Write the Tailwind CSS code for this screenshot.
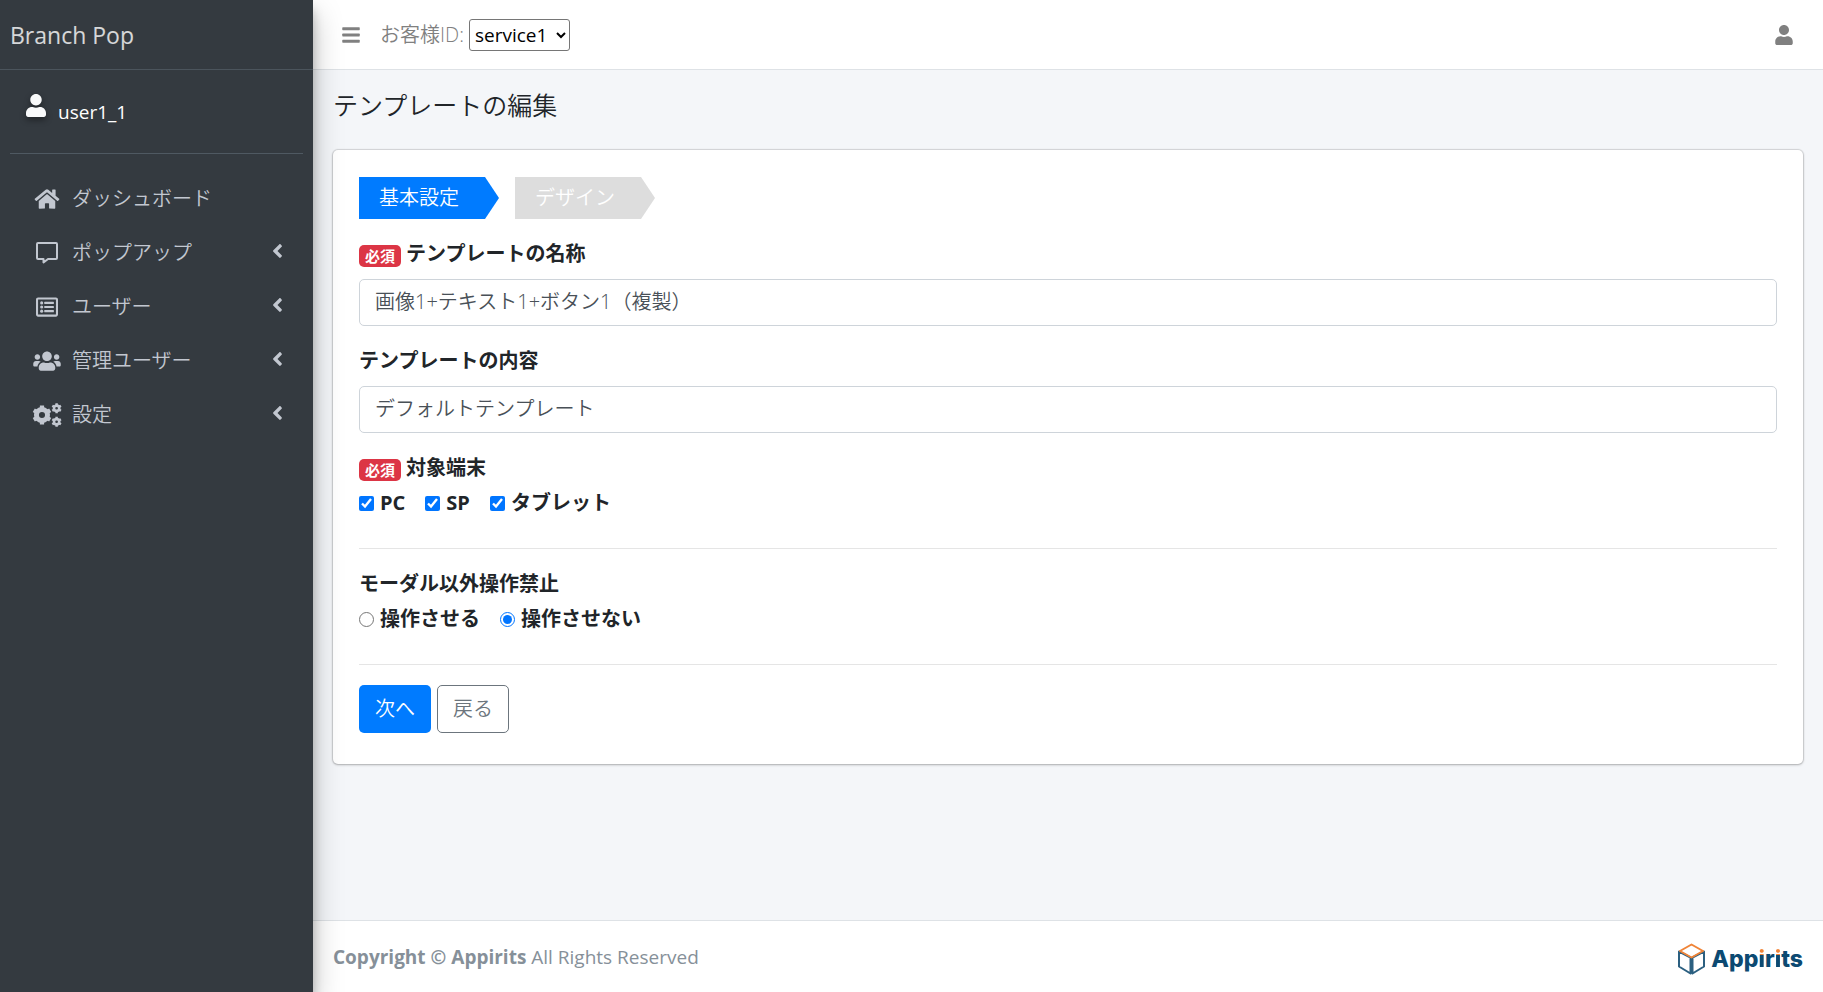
<!DOCTYPE html>
<html lang="ja">
<head>
<meta charset="utf-8">
<meta name="viewport" content="width=device-width, initial-scale=1">
<title>Branch Pop</title>
<script src="https://cdn.jsdelivr.net/npm/@tailwindcss/browser@4"></script>
</head>
<body class="flex min-h-screen bg-[#f4f6f9] font-['Open_Sans','Noto_Sans_CJK_JP',sans-serif] text-[20px] leading-[30px] text-[#212529]">

<aside class="relative z-10 w-[313px] shrink-0 bg-[#343a40] text-[#c2c7d0] shadow-[0_14px_28px_rgba(0,0,0,0.25),0_10px_10px_rgba(0,0,0,0.22)]">
  <a href="#" class="flex h-[70px] items-center border-b border-[#4b545c] px-2.5 text-[23px] text-white/80">Branch Pop</a>
  <div class="px-2.5">
    <div class="flex h-[84px] items-center gap-3 border-b border-[#4f5962] px-4 text-white">
      <svg class="mb-3 w-[20px] h-[23px] drop-shadow-[0_3px_3px_rgba(0,0,0,0.4)]" viewBox="0 0 448 512" fill="#f8f9fa"><path d="M224 256c70.700 0 128-57.300 128-128S294.700 0 224 0 96 57.300 96 128s57.300 128 128 128zm89.600 32h-16.700c-22.200 10.200-46.900 16-72.900 16s-50.600-5.800-72.900-16h-16.700C60.200 288 0 348.200 0 422.400V464c0 26.500 21.500 48 48 48h352c26.500 0 48-21.500 48-48v-41.600c0-74.200-60.200-134.400-134.400-134.400z"/></svg>
      <a href="#" class="text-[19px]">user1_1</a>
    </div>
    <nav class="flex flex-col pt-[18px] font-[350]">
      <a href="#" class="flex h-[54px] items-center gap-2.5 pl-[22px] pr-5">
        <svg class="w-[30px] h-[22px]" viewBox="0 0 576 512" fill="currentColor"><path d="M280.370 148.260L96 300.110V464a16 16 0 0 0 16 16l112.060-.29a16 16 0 0 0 15.920-16V368a16 16 0 0 1 16-16h64a16 16 0 0 1 16 16v95.640a16 16 0 0 0 16 16.050L464 480a16 16 0 0 0 16-16V300L295.670 148.260a12.190 12.190 0 0 0-15.300 0zM571.600 251.470L488 182.560V44.050a12 12 0 0 0-12-12h-56a12 12 0 0 0-12 12v72.610L318.470 43a48 48 0 0 0-61 0L4.340 251.470a12 12 0 0 0-1.600 16.900l25.500 31A12 12 0 0 0 45.150 301l235.220-193.740a12.190 12.190 0 0 1 15.300 0L530.900 301a12 12 0 0 0 16.900-1.600l25.500-31a12 12 0 0 0-1.700-16.930z"/></svg>
        <span>ダッシュボード</span>
      </a>
      <a href="#" class="flex h-[54px] items-center gap-2.5 pl-[22px] pr-5">
        <svg class="w-[30px] h-[22px]" viewBox="0 0 30 22" fill="none" stroke="currentColor" stroke-width="2" stroke-linejoin="round"><path d="M6 1H24Q25 1 25 2V16Q25 17 24 17H16L11.500 20.500V17H6Q5 17 5 16V2Q5 1 6 1Z"/></svg>
        <span class="grow">ポップアップ</span>
        <svg class="mb-1 w-[11px] h-[22px]" viewBox="0 0 256 512" fill="currentColor"><path d="M31.700 239l136-136c9.400-9.400 24.600-9.400 33.900 0l22.600 22.600c9.400 9.400 9.400 24.600 0 33.900L127.900 256l96.400 96.400c9.400 9.400 9.400 24.600 0 33.900L201.700 409c-9.400 9.400-24.600 9.400-33.900 0l-136-136c-9.500-9.400-9.500-24.600-.1-34z"/></svg>
      </a>
      <a href="#" class="flex h-[54px] items-center gap-2.5 pl-[22px] pr-5">
        <svg class="w-[30px] h-[22px]" viewBox="0 0 512 512" fill="currentColor"><path fill-rule="evenodd" d="M464 32H48C21.490 32 0 53.490 0 80v352c0 26.510 21.490 48 48 48h416c26.510 0 48-21.490 48-48V80c0-26.510-21.490-48-48-48zm-6 400H54a6 6 0 0 1-6-6V86a6 6 0 0 1 6-6h404a6 6 0 0 1 6 6v340a6 6 0 0 1-6 6z"/><circle cx="132" cy="160" r="36"/><circle cx="132" cy="256" r="36"/><circle cx="132" cy="352" r="36"/><rect x="192" y="136" width="224" height="48" rx="12"/><rect x="192" y="232" width="224" height="48" rx="12"/><rect x="192" y="328" width="224" height="48" rx="12"/></svg>
        <span class="grow">ユーザー</span>
        <svg class="mb-1 w-[11px] h-[22px]" viewBox="0 0 256 512" fill="currentColor"><path d="M31.700 239l136-136c9.400-9.400 24.600-9.400 33.900 0l22.600 22.600c9.400 9.400 9.400 24.600 0 33.900L127.900 256l96.400 96.400c9.400 9.400 9.400 24.600 0 33.900L201.700 409c-9.400 9.400-24.600 9.400-33.900 0l-136-136c-9.500-9.400-9.500-24.600-.1-34z"/></svg>
      </a>
      <a href="#" class="flex h-[54px] items-center gap-2.5 pl-[22px] pr-5">
        <svg class="w-[30px] h-[22px]" viewBox="0 0 640 512" fill="currentColor"><path d="M96 224c35.300 0 64-28.700 64-64s-28.700-64-64-64-64 28.700-64 64 28.700 64 64 64zm448 0c35.300 0 64-28.700 64-64s-28.700-64-64-64-64 28.700-64 64 28.700 64 64 64zm32 32h-64c-17.600 0-33.500 7.100-45.100 18.600 40.300 22.100 68.900 62 75.100 109.400h66c17.700 0 32-14.300 32-32v-32c0-35.300-28.700-64-64-64zm-256 0c61.900 0 112-50.100 112-112S381.900 32 320 32 208 82.100 208 144s50.100 112 112 112zm76.800 32h-8.300c-20.800 10-43.900 16-68.500 16s-47.600-6-68.500-16h-8.300C179.600 288 128 339.600 128 403.200V432c0 26.500 21.500 48 48 48h288c26.500 0 48-21.500 48-48v-28.800c0-63.600-51.600-115.200-115.200-115.200zm-223.700-13.400C161.500 263.100 145.600 256 128 256H64c-35.300 0-64 28.700-64 64v32c0 17.700 14.300 32 32 32h65.900c6.300-47.400 34.900-87.300 75.200-109.400z"/></svg>
        <span class="grow">管理ユーザー</span>
        <svg class="mb-1 w-[11px] h-[22px]" viewBox="0 0 256 512" fill="currentColor"><path d="M31.700 239l136-136c9.400-9.400 24.600-9.400 33.900 0l22.600 22.600c9.400 9.400 9.400 24.600 0 33.900L127.900 256l96.400 96.400c9.400 9.400 9.400 24.600 0 33.900L201.700 409c-9.400 9.400-24.600 9.400-33.900 0l-136-136c-9.500-9.400-9.500-24.600-.1-34z"/></svg>
      </a>
      <a href="#" class="flex h-[54px] items-center gap-2.5 pl-[22px] pr-5">
        <svg class="w-[30px] h-[24px]" viewBox="0 0 640 512" fill="none" stroke="currentColor">
          <circle cx="213" cy="256" r="118" stroke-width="106"/>
          <g stroke-width="90"><path d="M213 54V110M213 402V458M38 155L87 183M339 329L388 357M38 357L87 329M339 183L388 155"/></g>
          <circle cx="525" cy="112" r="56" stroke-width="54"/>
          <g stroke-width="52"><path d="M525 6V44M525 180V218M433 59L466 78M584 146L617 165M433 165L466 146M584 78L617 59"/></g>
          <circle cx="525" cy="400" r="56" stroke-width="54"/>
          <g stroke-width="52"><path d="M525 294V332M525 468V506M433 347L466 366M584 434L617 453M433 453L466 434M584 366L617 347"/></g>
        </svg>
        <span class="grow">設定</span>
        <svg class="mb-1 w-[11px] h-[22px]" viewBox="0 0 256 512" fill="currentColor"><path d="M31.700 239l136-136c9.400-9.400 24.600-9.400 33.900 0l22.600 22.600c9.400 9.400 9.400 24.600 0 33.900L127.900 256l96.400 96.400c9.400 9.400 9.400 24.600 0 33.900L201.700 409c-9.400 9.400-24.600 9.400-33.900 0l-136-136c-9.500-9.400-9.500-24.600-.1-34z"/></svg>
      </a>
    </nav>
  </div>
</aside>

<div class="flex min-w-0 grow flex-col">
  <header class="flex h-[70px] items-center border-b border-[#dee2e6] bg-white pl-[29px] pr-[30px] text-[#808080]">
    <button type="button" aria-label="メニュー" class="mr-5 flex"><svg class="w-[18px] h-[20px]" viewBox="0 0 448 512" fill="currentColor"><rect y="60" width="448" height="72" rx="16"/><rect y="220" width="448" height="72" rx="16"/><rect y="380" width="448" height="72" rx="16"/></svg></button>
    <label for="service" class="mr-[5px] font-[350]">お客様ID:</label>
    <select id="service" class="h-8 w-[101px] rounded-[3px] border border-[#767676] bg-white px-px text-[19px] leading-[28px] text-black"><option>service1</option></select>
    <button type="button" aria-label="アカウント" class="ml-auto flex"><svg class="w-[18px] h-[20px]" viewBox="0 0 448 512" fill="currentColor"><path d="M224 256c70.700 0 128-57.300 128-128S294.700 0 224 0 96 57.300 96 128s57.300 128 128 128zm89.600 32h-16.700c-22.200 10.200-46.900 16-72.900 16s-50.600-5.800-72.900-16h-16.700C60.200 288 0 348.200 0 422.400V464c0 26.500 21.500 48 48 48h352c26.500 0 48-21.500 48-48v-41.600c0-74.200-60.200-134.400-134.400-134.400z"/></svg></button>
  </header>

  <main class="grow px-5 pt-[17px]">
    <h1 class="mb-[27px] text-[25px] leading-[36px] font-[350]">テンプレートの編集</h1>
    <form class="rounded-[5px] bg-white px-[26px] pt-[27px] pb-[31px] shadow-[0_0_1px_1px_rgba(0,0,0,0.125),0_1px_3px_rgba(0,0,0,0.2)]">
      <ol class="mb-5 flex gap-4 font-[350] text-white">
        <li class="h-[42px] w-[140px] bg-[#007bff] pl-5 leading-[42px] [clip-path:polygon(0_0,126px_0,100%_50%,126px_100%,0_100%)]">基本設定</li>
        <li class="h-[42px] w-[140px] bg-[#dddddd] pl-5 leading-[42px] [clip-path:polygon(0_0,126px_0,100%_50%,126px_100%,0_100%)]">デザイン</li>
      </ol>

      <div class="mb-5">
        <label for="name" class="mb-2.5 flex items-center gap-[5px] font-bold"><span class="mt-1 h-[22px] rounded-[5px] bg-[#dc3545] px-1.5 text-[15px] leading-[22px] text-white">必須</span>テンプレートの名称</label>
        <input id="name" type="text" value="画像1+テキスト1+ボタン1（複製）" class="h-[47px] w-full rounded-[5px] border border-[#ced4da] bg-white px-[15px] pb-1 font-[350] text-[#495057]">
      </div>
      <div class="mb-5">
        <label for="content" class="mb-2.5 block font-bold">テンプレートの内容</label>
        <input id="content" type="text" value="デフォルトテンプレート" class="h-[47px] w-full rounded-[5px] border border-[#ced4da] bg-white px-[15px] pb-1 font-[350] text-[#495057]">
      </div>

      <fieldset>
        <legend class="flex items-center gap-[5px] pb-[5px] font-bold"><span class="mt-1 h-[22px] rounded-[5px] bg-[#dc3545] px-1.5 text-[15px] leading-[22px] text-white">必須</span>対象端末</legend>
        <div class="flex gap-5 font-bold">
          <label class="flex items-center gap-1.5"><input type="checkbox" checked class="size-[15px] accent-[#0075ff]"><span>PC</span></label>
          <label class="flex items-center gap-1.5"><input type="checkbox" checked class="size-[15px] accent-[#0075ff]"><span>SP</span></label>
          <label class="flex items-center gap-1.5"><input type="checkbox" checked class="size-[15px] accent-[#0075ff]">タブレット</label>
        </div>
      </fieldset>
      <hr class="mt-[30px] mb-5 border-[#e5e5e5]">
      <fieldset>
        <legend class="pb-[5px] font-bold">モーダル以外操作禁止</legend>
        <div class="flex gap-5 font-bold">
          <label class="flex items-center gap-1.5"><input type="radio" name="lock" class="size-[15px] accent-[#0075ff]">操作させる</label>
          <label class="flex items-center gap-1.5"><input type="radio" name="lock" checked class="size-[15px] accent-[#0075ff]">操作させない</label>
        </div>
      </fieldset>
      <hr class="mt-[30px] mb-5 border-[#e5e5e5]">
      <div class="flex gap-1.5 font-[350]">
        <button type="submit" class="h-12 rounded-[5px] bg-[#007bff] px-4 text-white">次へ</button>
        <button type="button" class="h-12 rounded-[5px] border border-[#6c757d] px-[15px] text-[#6c757d]">戻る</button>
      </div>
    </form>
  </main>

  <footer class="flex h-[72px] items-center justify-between border-t border-[#dee2e6] bg-white px-5 text-[19px] text-[#869099]">
    <p><strong>Copyright © Appirits</strong> All Rights Reserved</p>
    <a href="#" class="flex items-center gap-1.5 pt-1">
      <svg class="w-[27px] h-[32px]" viewBox="0 0 27 32" fill="none" stroke-width="2" stroke-linejoin="round"><path stroke="#2b5f80" d="M12.500 14.500L1 8.500V23.500L12.500 30.500ZM14.500 14.500L26 8.500V23.500L14.500 30.500Z"/><path stroke="#f08437" d="M13.500 1.500L25 8L13.500 14.500L2 8Z"/></svg>
      <span class="font-[Inter] text-[23px] font-extrabold text-[#0c4a72]">App<span class="bg-linear-to-b from-[#f08437] from-35% to-[#0c4a72] to-35% bg-clip-text text-transparent">i</span>r<span class="bg-linear-to-b from-[#f08437] from-35% to-[#0c4a72] to-35% bg-clip-text text-transparent">i</span>ts</span>
    </a>
  </footer>
</div>
</body>
</html>
